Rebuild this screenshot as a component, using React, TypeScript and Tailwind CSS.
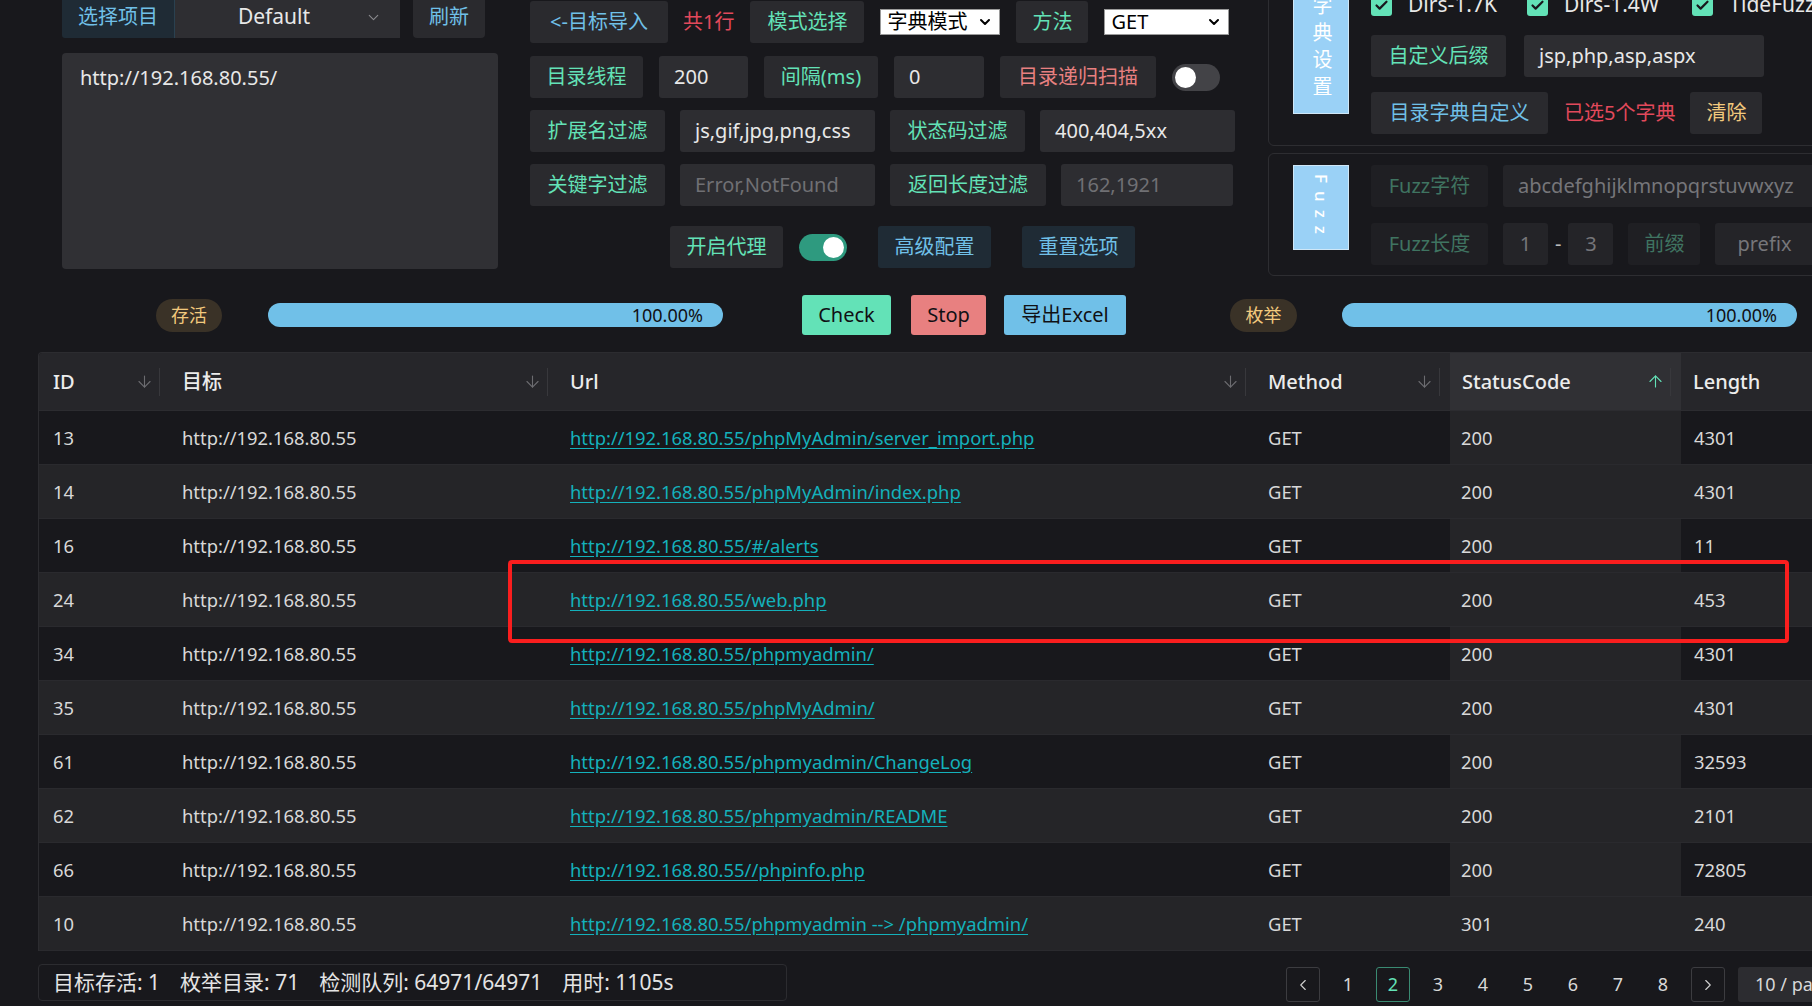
import React from 'react'
import { ArrowDown, ArrowUp, Check, ChevronDown, ChevronLeft, ChevronRight } from 'lucide-react'

const rows = [
  { id: '13', url: 'http://192.168.80.55/phpMyAdmin/server_import.php', code: '200', len: '4301' },
  { id: '14', url: 'http://192.168.80.55/phpMyAdmin/index.php', code: '200', len: '4301' },
  { id: '16', url: 'http://192.168.80.55/#/alerts', code: '200', len: '11' },
  { id: '24', url: 'http://192.168.80.55/web.php', code: '200', len: '453' },
  { id: '34', url: 'http://192.168.80.55/phpmyadmin/', code: '200', len: '4301' },
  { id: '35', url: 'http://192.168.80.55/phpMyAdmin/', code: '200', len: '4301' },
  { id: '61', url: 'http://192.168.80.55/phpmyadmin/ChangeLog', code: '200', len: '32593' },
  { id: '62', url: 'http://192.168.80.55/phpmyadmin/README', code: '200', len: '2101' },
  { id: '66', url: 'http://192.168.80.55//phpinfo.php', code: '200', len: '72805' },
  { id: '10', url: 'http://192.168.80.55/phpmyadmin --> /phpmyadmin/', code: '301', len: '240' },
]

const cols = 'grid grid-cols-[131px_388px_698px_194px_231px_200px]'

// small label-ish button used all over the option panels
function Btn({ w, color, bg = 'bg-[#2a2a2e]', children }: { w: string; color: string; bg?: string; children: React.ReactNode }) {
  return (
    <div className={`flex h-[42px] shrink-0 items-center justify-center rounded-[3px] text-[20px] ${w} ${color} ${bg}`}>
      {children}
    </div>
  )
}

function Field({ w, muted, children }: { w: string; muted?: boolean; children: React.ReactNode }) {
  return (
    <div className={`flex h-[42px] shrink-0 items-center rounded-[3px] bg-[#2d2d31] pl-[15px] text-[20px] ${w} ${muted ? 'text-[#707074]' : 'text-[#e8e8e8]'}`}>
      {children}
    </div>
  )
}

function Toggle({ on }: { on?: boolean }) {
  return (
    <div className={`flex h-[27px] w-[48px] shrink-0 items-center rounded-full px-[3px] ${on ? 'justify-end bg-[#2e9a7f]' : 'justify-start bg-[#434347]'}`}>
      <div className="h-[21px] w-[21px] rounded-full bg-white" />
    </div>
  )
}

function FakeSelect({ w, children }: { w: string; children: React.ReactNode }) {
  return (
    <div className={`flex h-[26px] shrink-0 items-center justify-between border border-[#9a9a9a] bg-white pl-[6px] pr-[6px] text-[20px] leading-none text-black ${w}`}>
      <span>{children}</span>
      <ChevronDown size={16} strokeWidth={3} />
    </div>
  )
}

function Checkbox({ label }: { label: string }) {
  return (
    <div className="flex items-center">
      <div className="flex h-[21px] w-[21px] items-center justify-center rounded-[3px] bg-[#63e2b7]">
        <Check size={15} strokeWidth={3.5} color="#18181c" />
      </div>
      <span className="ml-[16px] text-[21px] text-[#e8e8e8]">{label}</span>
    </div>
  )
}

function Progress() {
  return (
    <div className="flex h-[24px] w-[455px] items-center justify-end rounded-full bg-[#70c0e8] pr-[20px] text-[18px] text-[#101014]">
      100.00%
    </div>
  )
}

function Th({ label, sort, sorted }: { label: string; sort?: 'up' | 'down'; sorted?: boolean }) {
  return (
    <div className={`flex h-full items-center pl-[12px] pr-[10px] ${sorted ? 'bg-[#303034]' : ''}`}>
      <span className="text-[20px] font-medium text-[#ececec]">{label}</span>
      {sort && (
        <>
          <span className="ml-auto">
            {sort === 'up' ? (
              <ArrowUp size={19} strokeWidth={1.4} color="#63e2b7" />
            ) : (
              <ArrowDown size={19} strokeWidth={1.4} color="#6c6c70" />
            )}
          </span>
          <div className="ml-[5px] h-[28px] w-px bg-[#38383c]" />
        </>
      )}
    </div>
  )
}

export default function App() {
  return (
    <div className="relative h-[1006px] w-[1812px] overflow-hidden bg-[#18181c] font-['Noto_Sans','Noto_Sans_CJK_SC',sans-serif] text-[#e6e6e6]">
      {/* options area */}
      <div className="flex h-[283px] items-start">
        {/* targets */}
        <div className="ml-[62px] -mt-[4px] w-[436px] shrink-0">
          <div className="flex h-[42px]">
            <div className="flex w-[113px] items-center justify-center rounded-l-[3px] border-r border-[#2a4150] bg-[#1f2b35] text-[20px] text-[#70c0e8]">
              选择项目
            </div>
            <div className="flex w-[225px] items-center bg-[#2e2e32] pr-[18px] text-[21px] text-[#e8e8e8]">
              <span className="flex-1 pl-[8px] text-center">Default</span>
              <ChevronDown size={17} strokeWidth={1.5} color="#8a8a8e" />
            </div>
            <div className="ml-[13px] flex w-[72px] items-center justify-center rounded-[4px] bg-[#2a2a2e] text-[20px] text-[#70c0e8]">
              刷新
            </div>
          </div>
          <div className="mt-[15px] h-[216px] rounded-[4px] bg-[#303034] px-[18px] pt-[10px] text-[20px] text-[#e8e8e8]">
            http://192.168.80.55/
          </div>
        </div>

        {/* scan options */}
        <div className="ml-[32px] mt-[1px] flex w-[705px] shrink-0 flex-col">
          <div className="flex items-center gap-[15px]">
            <Btn w="w-[138px]" color="text-[#70c0e8]">&lt;-目标导入</Btn>
            <span className="text-[20px] text-[#e2495b]">共1行</span>
            <div className="ml-[1px]">
              <Btn w="w-[114px]" color="text-[#63e2b7]">模式选择</Btn>
            </div>
            <div className="ml-[1px]">
              <FakeSelect w="w-[120px]">字典模式</FakeSelect>
            </div>
            <div className="ml-[1px]">
              <Btn w="w-[72px]" color="text-[#63e2b7]">方法</Btn>
            </div>
            <div className="ml-[1px]">
              <FakeSelect w="w-[125px]">GET</FakeSelect>
            </div>
          </div>
          <div className="mt-[13px] flex items-center gap-[16px]">
            <Btn w="w-[113px]" color="text-[#63e2b7]">目录线程</Btn>
            <Field w="w-[89px]">200</Field>
            <Btn w="w-[114px]" color="text-[#63e2b7]">间隔(ms)</Btn>
            <Field w="w-[90px]">0</Field>
            <Btn w="w-[156px]" color="text-[#e88080]">目录递归扫描</Btn>
            <Toggle />
          </div>
          <div className="mt-[12px] flex items-center gap-[15px]">
            <Btn w="w-[135px]" color="text-[#63e2b7]">扩展名过滤</Btn>
            <Field w="w-[195px]">js,gif,jpg,png,css</Field>
            <Btn w="w-[135px]" color="text-[#63e2b7]">状态码过滤</Btn>
            <Field w="w-[195px]">400,404,5xx</Field>
          </div>
          <div className="mt-[12px] flex items-center gap-[15px]">
            <Btn w="w-[135px]" color="text-[#63e2b7]">关键字过滤</Btn>
            <Field w="w-[195px]" muted>Error,NotFound</Field>
            <Btn w="w-[156px]" color="text-[#63e2b7]">返回长度过滤</Btn>
            <Field w="w-[172px]" muted>162,1921</Field>
          </div>
          <div className="ml-[140px] mt-[20px] flex items-center">
            <Btn w="w-[113px]" color="text-[#63e2b7]">开启代理</Btn>
            <div className="ml-[16px]">
              <Toggle on />
            </div>
            <div className="ml-[31px]">
              <Btn w="w-[113px]" color="text-[#70c0e8]" bg="bg-[#1f2b35]">高级配置</Btn>
            </div>
            <div className="ml-[31px]">
              <Btn w="w-[113px]" color="text-[#70c0e8]" bg="bg-[#1f2b35]">重置选项</Btn>
            </div>
          </div>
        </div>

        {/* dictionaries */}
        <div className="ml-[33px] -mt-[30px] w-[620px] shrink-0">
          <div className="flex rounded-[6px] border border-[#2d2d31] pb-[11px] pl-[24px] pt-[12px]">
            <div className="flex h-[131px] w-[56px] shrink-0 items-end justify-center border border-[#cfe7f7] bg-[#9ad1f6] pb-[10px]">
              <span className="text-[20px] leading-none tracking-[7px] text-white [writing-mode:vertical-rl]">字典设置</span>
            </div>
            <div className="ml-[22px] flex flex-col">
              <div className="flex h-[44px] items-center">
                <Checkbox label="Dirs-1.7K" />
                <div className="ml-[30px]">
                  <Checkbox label="Dirs-1.4W" />
                </div>
                <div className="ml-[33px]">
                  <Checkbox label="TideFuzz" />
                </div>
              </div>
              <div className="mt-[8px] flex items-center gap-[18px]">
                <Btn w="w-[135px]" color="text-[#63e2b7]">自定义后缀</Btn>
                <Field w="w-[240px]">jsp,php,asp,aspx</Field>
              </div>
              <div className="mt-[15px] flex items-center">
                <Btn w="w-[177px]" color="text-[#70c0e8]">目录字典自定义</Btn>
                <span className="ml-[16px] text-[20px] text-[#e2495b]">已选5个字典</span>
                <div className="ml-[15px]">
                  <Btn w="w-[72px]" color="text-[#f2c97d]">清除</Btn>
                </div>
              </div>
            </div>
          </div>

          <div className="mt-[7px] flex rounded-[6px] border border-[#2d2d31] pb-[10px] pl-[24px] pt-[11px]">
            <div className="flex h-[85px] w-[56px] shrink-0 items-center justify-center border border-[#cfe7f7] bg-[#9ad1f6]">
              <span className="text-[17px] font-medium leading-none tracking-[8px] text-white [writing-mode:vertical-rl]">Fuzz</span>
            </div>
            <div className="ml-[22px] flex flex-col">
              <div className="flex items-center gap-[15px]">
                <Btn w="w-[117px]" color="text-[#3f7461]" bg="bg-[#1f1f23]">Fuzz字符</Btn>
                <div className="flex h-[42px] w-[400px] items-center rounded-[3px] bg-[#242428] pl-[15px] text-[20px] text-[#76767a]">
                  abcdefghijklmnopqrstuvwxyz
                </div>
              </div>
              <div className="mt-[16px] flex items-center">
                <Btn w="w-[117px]" color="text-[#3f7461]" bg="bg-[#1f1f23]">Fuzz长度</Btn>
                <div className="ml-[15px] flex h-[42px] w-[45px] items-center justify-center rounded-[3px] bg-[#242428] text-[20px] text-[#76767a]">1</div>
                <span className="mx-[7px] text-[20px] text-[#bdbdbd]">-</span>
                <div className="flex h-[42px] w-[45px] items-center justify-center rounded-[3px] bg-[#242428] text-[20px] text-[#76767a]">3</div>
                <div className="ml-[15px]">
                  <Btn w="w-[72px]" color="text-[#3f7461]" bg="bg-[#1f1f23]">前缀</Btn>
                </div>
                <div className="ml-[15px] flex h-[42px] w-[200px] items-center rounded-[3px] bg-[#242428] pl-[22px] text-[20px] text-[#76767a]">
                  prefix
                </div>
              </div>
            </div>
          </div>
        </div>
      </div>

      {/* progress + actions */}
      <div className="mt-[12px] flex h-[40px] items-center">
        <div className="ml-[156px] flex h-[33px] w-[66px] shrink-0 items-center justify-center rounded-full bg-[#3a3227] text-[18px] text-[#f2c97d]">存活</div>
        <div className="ml-[46px] shrink-0">
          <Progress />
        </div>
        <div className="ml-[79px] flex h-[40px] w-[89px] shrink-0 items-center justify-center rounded-[3px] bg-[#63e2b7] text-[20px] text-[#101014]">Check</div>
        <div className="ml-[20px] flex h-[40px] w-[75px] shrink-0 items-center justify-center rounded-[3px] bg-[#e88080] text-[20px] text-[#101014]">Stop</div>
        <div className="ml-[18px] flex h-[40px] w-[122px] shrink-0 items-center justify-center rounded-[3px] bg-[#70c0e8] text-[20px] text-[#101014]">导出Excel</div>
        <div className="ml-[104px] flex h-[33px] w-[67px] shrink-0 items-center justify-center rounded-full bg-[#3a3227] text-[18px] text-[#f2c97d]">枚举</div>
        <div className="ml-[45px] shrink-0">
          <Progress />
        </div>
      </div>

      {/* results table */}
      <div className="ml-[38px] mt-[17px] w-[1842px] overflow-hidden rounded-tl-[4px] border-l border-t border-[#2c2c30]">
        <div className={`${cols} h-[58px] border-b border-[#2c2c30] bg-[#26262a]`}>
          <div className="flex h-full items-center pl-[14px] pr-[10px]">
            <span className="text-[20px] font-medium text-[#ececec]">ID</span>
            <span className="ml-auto">
              <ArrowDown size={19} strokeWidth={1.4} color="#6c6c70" />
            </span>
            <div className="ml-[5px] h-[28px] w-px bg-[#38383c]" />
          </div>
          <Th label="目标" sort="down" />
          <Th label="Url" sort="down" />
          <Th label="Method" sort="down" />
          <Th label="StatusCode" sort="up" sorted />
          <Th label="Length" />
        </div>
        {rows.map((r, i) => {
          const striped = i % 2 === 1
          return (
            <div
              key={r.id}
              className={`${cols} h-[54px] border-b border-[#2a2a2e] text-[18.4px] text-[#d8d8d8] ${striped ? 'bg-[#252528]' : 'bg-[#18181c]'}`}
            >
              <div className="flex items-center pl-[14px]">{r.id}</div>
              <div className="flex items-center pl-[12px]">http://192.168.80.55</div>
              <div className="flex items-center pl-[12px]">
                <span className="text-[#14b1bb] underline underline-offset-[3px]">{r.url}</span>
              </div>
              <div className="flex items-center pl-[12px]">GET</div>
              <div className="flex items-center bg-[#252528] pl-[11px]">{r.code}</div>
              <div className="flex items-center pl-[13px]">{r.len}</div>
            </div>
          )
        })}
      </div>

      {/* footer */}
      <div className="mt-[12px] flex items-center">
        <div className="ml-[38px] flex h-[37px] w-[749px] shrink-0 items-center rounded-[4px] border border-[#2c2c30] pl-[14px] text-[21px] text-[#e4e4e4]">
          <span>目标存活: 1</span>
          <span className="ml-[20px]">枚举目录: 71</span>
          <span className="ml-[20px]">检测队列: 64971/64971</span>
          <span className="ml-[20px]">用时: 1105s</span>
        </div>
        <div className="ml-[499px] mt-[4px] flex shrink-0 items-center gap-[11px]">
          <div className="flex h-[35px] w-[34px] items-center justify-center rounded-[3px] border border-[#3c3c40]">
            <ChevronLeft size={18} strokeWidth={1.5} color="#d0d0d0" />
          </div>
          {['1', '2', '3', '4', '5', '6', '7', '8'].map((n) => (
            <div
              key={n}
              className={`flex h-[35px] w-[34px] items-center justify-center rounded-[3px] text-[18px] ${n === '2' ? 'border border-[#3a8a72] text-[#63e2b7]' : 'text-[#d8d8d8]'}`}
            >
              {n}
            </div>
          ))}
          <div className="flex h-[35px] w-[34px] items-center justify-center rounded-[3px] border border-[#3c3c40]">
            <ChevronRight size={18} strokeWidth={1.5} color="#d0d0d0" />
          </div>
          <div className="ml-[2px] flex h-[35px] w-[130px] items-center rounded-[3px] bg-[#2c2c30] pl-[17px] text-[18px] text-[#d8d8d8]">
            10 / page
          </div>
        </div>
      </div>

      {/* highlight drawn over the screenshot */}
      <div className="pointer-events-none absolute left-[508px] top-[560px] h-[83px] w-[1281px] rounded-[4px] border-[4px] border-[#fa1e1e]" />
    </div>
  )
}
